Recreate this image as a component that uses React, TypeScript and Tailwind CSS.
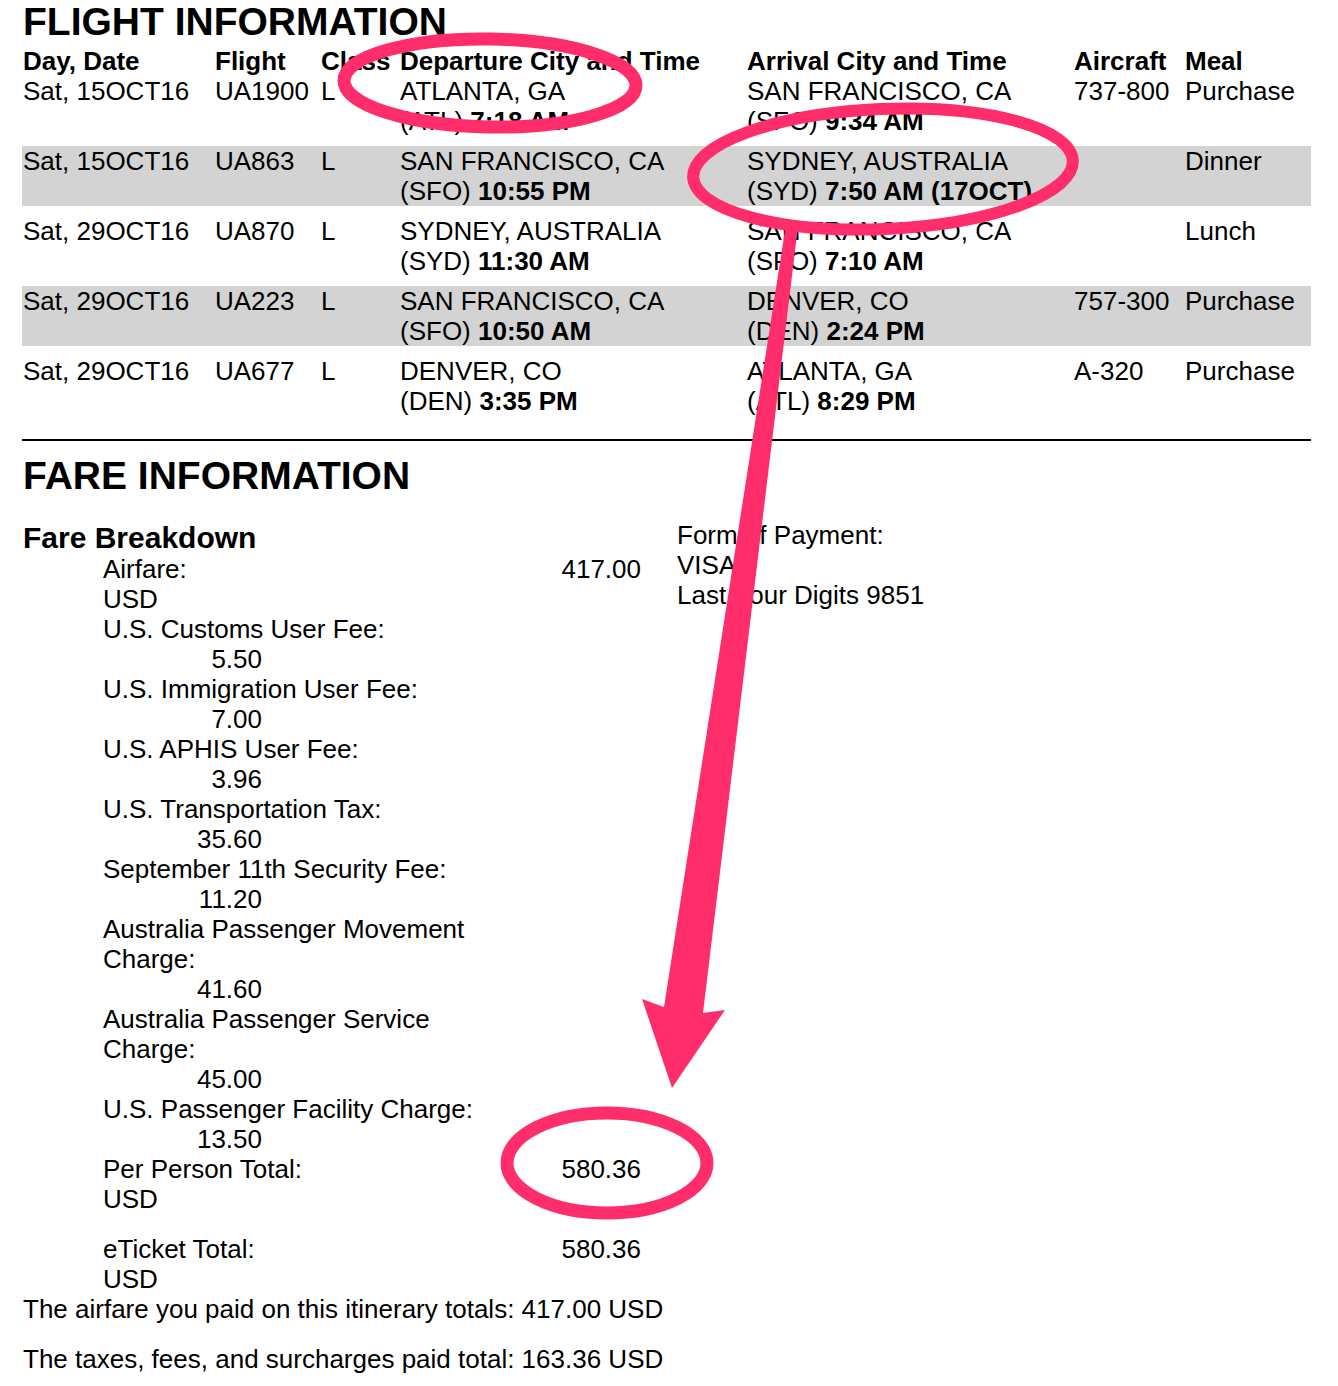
import React from "react";

type Flight = {
  date: string;
  flight: string;
  cls: string;
  depCity: string;
  depCode: string;
  depTime: string;
  arrCity: string;
  arrCode: string;
  arrTime: string;
  aircraft: string;
  meal: string;
  shaded?: boolean;
};

const FLIGHTS: Flight[] = [
  { date: "Sat, 15OCT16", flight: "UA1900", cls: "L", depCity: "ATLANTA, GA", depCode: "(ATL)", depTime: "7:18 AM", arrCity: "SAN FRANCISCO, CA", arrCode: "(SFO)", arrTime: "9:34 AM", aircraft: "737-800", meal: "Purchase" },
  { date: "Sat, 15OCT16", flight: "UA863", cls: "L", depCity: "SAN FRANCISCO, CA", depCode: "(SFO)", depTime: "10:55 PM", arrCity: "SYDNEY, AUSTRALIA", arrCode: "(SYD)", arrTime: "7:50 AM (17OCT)", aircraft: "", meal: "Dinner", shaded: true },
  { date: "Sat, 29OCT16", flight: "UA870", cls: "L", depCity: "SYDNEY, AUSTRALIA", depCode: "(SYD)", depTime: "11:30 AM", arrCity: "SAN FRANCISCO, CA", arrCode: "(SFO)", arrTime: "7:10 AM", aircraft: "", meal: "Lunch" },
  { date: "Sat, 29OCT16", flight: "UA223", cls: "L", depCity: "SAN FRANCISCO, CA", depCode: "(SFO)", depTime: "10:50 AM", arrCity: "DENVER, CO", arrCode: "(DEN)", arrTime: "2:24 PM", aircraft: "757-300", meal: "Purchase", shaded: true },
  { date: "Sat, 29OCT16", flight: "UA677", cls: "L", depCity: "DENVER, CO", depCode: "(DEN)", depTime: "3:35 PM", arrCity: "ATLANTA, GA", arrCode: "(ATL)", arrTime: "8:29 PM", aircraft: "A-320", meal: "Purchase" },
];

const FEES: { label: string[]; amount: string }[] = [
  { label: ["U.S. Customs User Fee:"], amount: "5.50" },
  { label: ["U.S. Immigration User Fee:"], amount: "7.00" },
  { label: ["U.S. APHIS User Fee:"], amount: "3.96" },
  { label: ["U.S. Transportation Tax:"], amount: "35.60" },
  { label: ["September 11th Security Fee:"], amount: "11.20" },
  { label: ["Australia Passenger Movement", "Charge:"], amount: "41.60" },
  { label: ["Australia Passenger Service", "Charge:"], amount: "45.00" },
  { label: ["U.S. Passenger Facility Charge:"], amount: "13.50" },
];

const COLS = "grid grid-cols-[192px_106px_79px_347px_327px_111px_1fr] pl-px";

function TotalRow({ label, amount }: { label: string; amount: string }) {
  return (
    <div className="pl-[80px]">
      <div className="flex justify-between">
        <span>{label}</span>
        <span>{amount}</span>
      </div>
      <div>USD</div>
    </div>
  );
}

export default function App() {
  return (
    <div className="relative w-[1338px] h-[1386px] overflow-hidden bg-white text-black font-['Liberation_Sans',Arial,sans-serif] text-[26px] leading-[30px]">
      <div className="pl-[22px] w-[1311px]">
        {/* flight information */}
        <h1 className="pl-px text-[39px] leading-[44px] font-bold">FLIGHT INFORMATION</h1>
        <div className={`${COLS} mt-[2px] font-bold`}>
          <div>Day, Date</div>
          <div>Flight</div>
          <div>Class</div>
          <div>Departure City and Time</div>
          <div>Arrival City and Time</div>
          <div>Aircraft</div>
          <div>Meal</div>
        </div>
        <div className="flex flex-col gap-[10px]">
          {FLIGHTS.map((f, i) => (
            <div key={i} className={`${COLS} h-[60px] ${f.shaded ? "bg-[#d3d3d3]" : ""}`}>
              <div>{f.date}</div>
              <div>{f.flight}</div>
              <div>{f.cls}</div>
              <div>
                <div>{f.depCity}</div>
                <div>
                  {f.depCode} <b>{f.depTime}</b>
                </div>
              </div>
              <div>
                <div>{f.arrCity}</div>
                <div>
                  {f.arrCode} <b>{f.arrTime}</b>
                </div>
              </div>
              <div>{f.aircraft}</div>
              <div>{f.meal}</div>
            </div>
          ))}
        </div>

        <hr className="mt-[23px] border-0 h-[2px] bg-black" />

        {/* fare information */}
        <div className="pl-px">
          <h2 className="mt-[13px] text-[39px] leading-[44px] font-bold">FARE INFORMATION</h2>
          <div className="mt-[23px] flex gap-[36px]">
            <div className="w-[618px]">
              <div className="text-[30px] leading-[33px] font-bold">Fare Breakdown</div>
              <TotalRow label="Airfare:" amount="417.00" />
              {FEES.map((fee) => (
                <div key={fee.amount} className="pl-[80px]">
                  {fee.label.map((l) => (
                    <div key={l}>{l}</div>
                  ))}
                  <div className="w-[159px] text-right">{fee.amount}</div>
                </div>
              ))}
              <TotalRow label="Per Person Total:" amount="580.36" />
              <div className="mt-[20px]">
                <TotalRow label="eTicket Total:" amount="580.36" />
              </div>
            </div>
            <div className="-mt-px">
              <div>Form of Payment:</div>
              <div>VISA</div>
              <div>Last Four Digits 9851</div>
            </div>
          </div>
          <div>The airfare you paid on this itinerary totals: 417.00 USD</div>
          <div className="mt-[20px]">The taxes, fees, and surcharges paid total: 163.36 USD</div>
        </div>
      </div>

      {/* pink annotations drawn over the page */}
      <svg className="absolute inset-0 pointer-events-none" width="1338" height="1386" viewBox="0 0 1338 1386">
        <ellipse cx="490" cy="83" rx="146" ry="44" transform="rotate(1 490 83)" fill="none" stroke="#ff2d6b" strokeWidth="13" />
        <ellipse cx="883" cy="169" rx="190" ry="60" transform="rotate(-2.5 883 169)" fill="none" stroke="#ff2d6b" strokeWidth="12" />
        <ellipse cx="607" cy="1163" rx="100" ry="50" fill="none" stroke="#ff2d6b" strokeWidth="13" />
        <polygon points="786,224 798,226 703,1013 725,1010 672,1088 642,999 664,1007" fill="#ff2d6b" />
      </svg>
    </div>
  );
}
